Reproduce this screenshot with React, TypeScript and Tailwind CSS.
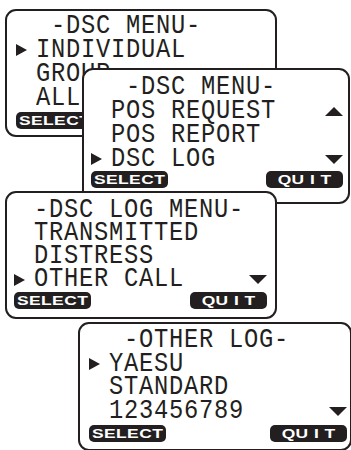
type Row = { text: string; mark?: boolean; arrow?: 'up' | 'down' };

type ScreenProps = {
  box: string;
  pad: string;
  lead: string;
  btnGap: string;
  rows: Row[];
};

const mono = { fontFamily: '"Liberation Mono", "DejaVu Sans Mono", monospace' };

function Mark() {
  return (
    <svg width="11" height="12" viewBox="0 0 11 12" className="shrink-0">
      <polygon points="0,0 11,6 0,12" fill="#231f20" />
    </svg>
  );
}

function Arrow({ dir }: { dir: 'up' | 'down' }) {
  return (
    <svg width="18" height="9" viewBox="0 0 18 9" className="ml-auto shrink-0">
      {dir === 'up' ? (
        <polygon points="9,0 18,9 0,9" fill="#231f20" />
      ) : (
        <polygon points="0,0 18,0 9,9" fill="#231f20" />
      )}
    </svg>
  );
}

function Key({ label }: { label: string }) {
  return (
    <div className="flex h-[17px] w-[77px] items-center justify-center rounded-[5px] bg-[#231f20]">
      <span
        className="inline-block scale-x-[1.45] text-[12px] leading-none font-black tracking-[0.3px] whitespace-pre text-white"
        style={{ fontFamily: '"Liberation Sans", Arial, sans-serif' }}
      >
        {label}
      </span>
    </div>
  );
}

function Screen({ box, pad, lead, btnGap, rows }: ScreenProps) {
  return (
    <div className={`absolute flex flex-col rounded-[11px] border-2 border-[#231f20] bg-white ${box} ${pad}`}>
      <div className={`flex flex-col text-[27px] tracking-[0.85px] text-[#231f20] ${lead}`} style={mono}>
        {rows.map((r, i) => (
          <div key={i} className="flex items-center">
            <div className="flex w-[20px] shrink-0 items-center">{r.mark && <Mark />}</div>
            <span className="inline-block origin-left scale-x-[0.88] whitespace-pre">{r.text}</span>
            {r.arrow && <Arrow dir={r.arrow} />}
          </div>
        ))}
      </div>
      <div className={`flex items-center justify-between ${btnGap}`}>
        <Key label="SELECT" />
        <Key label="QU I T" />
      </div>
    </div>
  );
}

export default function App() {
  return (
    <div className="relative h-[450px] w-[351px] overflow-hidden bg-white">
      <Screen
        box="left-[5px] top-[9px] w-[272px] h-[128px]"
        pad="pl-[9px] pr-[8px] pt-[3px]"
        lead="leading-[24px]"
        btnGap="mt-[2px]"
        rows={[
          { text: ' -DSC MENU-' },
          { text: 'INDIVIDUAL', mark: true },
          { text: 'GROUP' },
          { text: 'ALL' },
        ]}
      />
      <Screen
        box="left-[82px] top-[68px] w-[268px] h-[136px]"
        pad="pl-[7px] pr-[5px] pt-[5px]"
        lead="leading-[24px]"
        btnGap="mt-[0px]"
        rows={[
          { text: ' -DSC MENU-' },
          { text: 'POS REQUEST', arrow: 'up' },
          { text: 'POS REPORT' },
          { text: 'DSC LOG', mark: true, arrow: 'down' },
        ]}
      />
      <Screen
        box="left-[5px] top-[191px] w-[272px] h-[128px]"
        pad="pl-[7px] pr-[8px] pt-[6px]"
        lead="leading-[23px]"
        btnGap="mt-[1px]"
        rows={[
          { text: '-DSC LOG MENU-' },
          { text: 'TRANSMITTED' },
          { text: 'DISTRESS' },
          { text: 'OTHER CALL', mark: true, arrow: 'down' },
        ]}
      />
      <Screen
        box="left-[78px] top-[322px] w-[274px] h-[129px]"
        pad="pl-[9px] pr-[3px] pt-[5px]"
        lead="leading-[23.5px]"
        btnGap="mt-[2px]"
        rows={[
          { text: ' -OTHER LOG-' },
          { text: 'YAESU', mark: true },
          { text: 'STANDARD' },
          { text: '123456789', arrow: 'down' },
        ]}
      />
    </div>
  );
}
